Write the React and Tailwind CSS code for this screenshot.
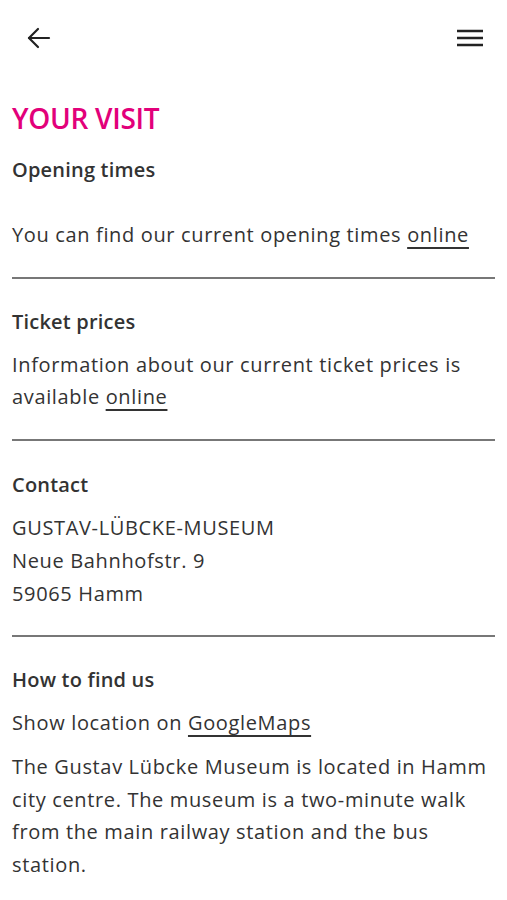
export default function App() {
  const font = { fontFamily: '"Open Sans", "Noto Sans", sans-serif' };
  return (
    <div className="w-[507px] min-h-[900px] bg-white text-[#333]" style={font}>
      {/* Top bar */}
      <div className="h-[76px] flex items-center justify-between pl-[27px] pr-[24px]">
        <svg width="24" height="24" viewBox="0 0 24 24" fill="none" stroke="#222" strokeWidth="2.2" strokeLinecap="round" strokeLinejoin="round">
          <path d="M22 12H2" />
          <path d="M11 3l-9 9 9 9" />
        </svg>
        <svg width="26" height="18" viewBox="0 0 26 18" fill="none" stroke="#222" strokeWidth="2.6">
          <path d="M0 2h26M0 9h26M0 16h26" />
        </svg>
      </div>

      <div className="px-3">
        <h1 className="text-[#e2007a] text-[28px] font-semibold leading-[34px] mt-[25px] tracking-[-0.3px]">YOUR VISIT</h1>

        {/* Opening times */}
        <h2 className="text-[20px] font-semibold leading-[32px] mt-[19px] tracking-[0.2px]">Opening times</h2>
        <p className="text-[20px] leading-[32px] mt-[33px] tracking-[0.65px]">
          You can find our current opening times{' '}
          <a className="underline underline-offset-[5px] decoration-[2px]">online</a>
        </p>
        <hr className="border-0 h-[2px] bg-[#777] mt-[26px]" />

        {/* Ticket prices */}
        <h2 className="text-[20px] font-semibold leading-[32px] mt-[27px] tracking-[0.2px]">Ticket prices</h2>
        <p className="text-[20px] leading-[32px] mt-[11px] tracking-[0.65px]">
          Information about our current ticket prices is available{' '}
          <a className="underline underline-offset-[5px] decoration-[2px]">online</a>
        </p>
        <hr className="border-0 h-[2px] bg-[#777] mt-[26px]" />

        {/* Contact */}
        <h2 className="text-[20px] font-semibold leading-[32px] mt-[28px] tracking-[0.2px]">Contact</h2>
        <div className="text-[20px] leading-[33px] mt-[10px] tracking-[0.65px]">
          <div>GUSTAV-LÜBCKE-MUSEUM</div>
          <div>Neue Bahnhofstr. 9</div>
          <div>59065 Hamm</div>
        </div>
        <hr className="border-0 h-[2px] bg-[#777] mt-[25px]" />

        {/* How to find us */}
        <h2 className="text-[20px] font-semibold leading-[32px] mt-[27px] tracking-[0.2px]">How to find us</h2>
        <p className="text-[20px] leading-[32px] mt-[11px] tracking-[0.65px]">
          Show location on{' '}
          <a className="underline underline-offset-[5px] decoration-[2px]">GoogleMaps</a>
        </p>
        <p className="text-[20px] leading-[32.5px] mt-[12px] tracking-[0.65px]">
          The Gustav Lübcke Museum is located in Hamm city centre. The museum is a two-minute walk from the main railway station and the bus station.
        </p>
      </div>
    </div>
  );
}
